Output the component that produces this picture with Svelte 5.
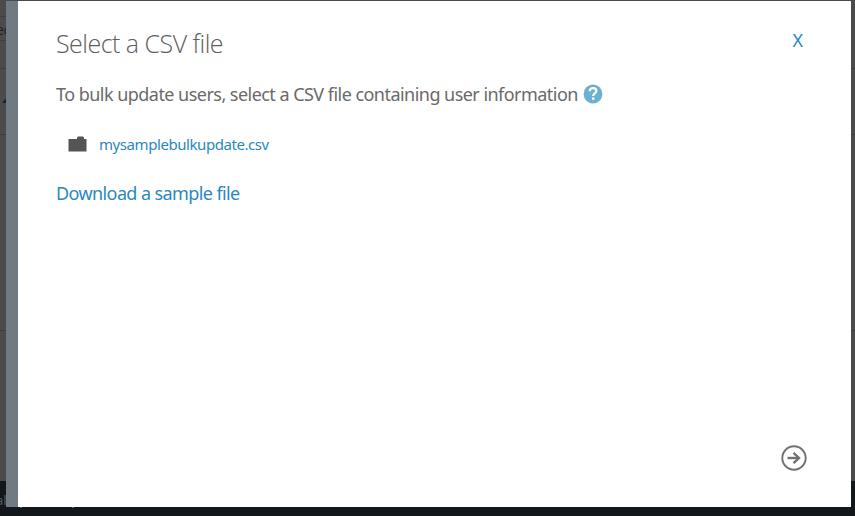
<script>
  const title = 'Select a CSV file';
  const fileName = 'mysamplebulkupdate.csv';
</script>

<div class="screen">
  <div class="page">
    <div class="row first"></div>
    <div class="row search"><span>ec</span></div>
    <div class="row head"></div>
    <div class="row sort"><svg width="6" height="6" viewBox="0 0 6 6"><path d="M1 6L6 0V6Z" fill="#18232b" /></svg></div>
    <div class="row body"></div>
    <div class="row rest"></div>
    <div class="footer"><span>al</span><i class="tail one"></i><i class="tail two"></i></div>
  </div>

  <div class="dialog">
    <header>
      <h1>{title}</h1>
      <a class="close" href="#close">X</a>
    </header>
    <div class="prompt">
      <p>To bulk update users, select a CSV file containing user information</p>
      <svg class="help" width="20" height="20" viewBox="0 0 20 20">
        <circle cx="10" cy="10" r="9.4" fill="#6bb0d3" />
        <path d="M6.7 7.2C6.8 5.2 8.2 4.2 10.1 4.2C12 4.2 13.4 5.3 13.4 7C13.4 9.2 10.3 9.3 10.2 12" fill="none" stroke="#fff" stroke-width="2.2" />
        <rect x="9" y="13.4" width="2.4" height="2.4" fill="#fff" />
      </svg>
    </div>
    <div class="file">
      <svg width="19" height="16" viewBox="0 0 19 16">
        <path d="M.5 3H9V1.5L10 .5H15L16 1.5V3H18.5V15.5H.5Z" fill="#555" />
      </svg>
      <a href="#file">{fileName}</a>
    </div>
    <a class="sample" href="#sample">Download a sample file</a>
    <svg class="next" width="26" height="26" viewBox="0 0 26 26" fill="none" stroke="#707070">
      <circle cx="13" cy="13" r="11.7" stroke-width="1.9" />
      <path d="M6.5 13H18" stroke-width="2.4" />
      <path d="M12.5 7.8L18 13L12.5 18.2" stroke-width="2.4" />
    </svg>
  </div>
</div>

<style>
  .screen {
    position: relative;
    width: 855px;
    height: 516px;
    overflow: hidden;
    font-family: "Noto Sans", "Open Sans", sans-serif;
  }
  .page { display: flex; flex-direction: column; height: 516px; background: #4b4b4b; }
  .row { box-sizing: border-box; border-bottom: 1px solid #3d3d3d; }
  .first { height: 17px; border-color: #35434c; width: 18px; }
  .search { height: 24px; border-color: #35434c; width: 18px; overflow: hidden; }
  .search span { display: block; margin-left: -4px; font-size: 14px; line-height: 26px; letter-spacing: -.4px; color: #222; }
  .head { height: 28px; }
  .sort { height: 66px; padding: 28px 0 0 1px; }
  .sort svg { display: block; }
  .body { height: 196px; }
  .rest { height: 150px; border: 0; }
  .footer { position: relative; height: 35px; background: #11171b; }
  .footer span { display: block; margin-left: -4px; padding-top: 10px; font-size: 13px; line-height: 18px; color: #555a5d; }
  .tail { position: absolute; top: 26px; width: 2px; height: 1px; background: #62676a; }
  .one { left: 20px; }
  .two { left: 72px; }
  .dialog {
    position: absolute;
    left: 6px;
    top: 1px;
    box-sizing: border-box;
    display: flex;
    flex-direction: column;
    width: 845px;
    height: 506px;
    padding: 26px 44px 36px 38px;
    border-left: 12px solid #707a82;
    background: #fff;
  }
  header { display: flex; justify-content: space-between; height: 51px; }
  h1, p, a { margin: 0; white-space: nowrap; }
  h1 { font-weight: 300; font-family: "Open Sans", sans-serif; font-size: 25px; line-height: 33px; letter-spacing: -.52px; color: #5e5e5e; }
  a { color: #2b87c0; text-decoration: none; }
  .close { font-size: 18px; line-height: 27px; margin-right: 4px; }
  .prompt { display: flex; align-items: center; height: 32px; gap: 5px; }
  p { font-size: 18px; letter-spacing: -.535px; color: #6a6a6a; }
  .help { flex: none; }
  .file { display: flex; align-items: center; height: 24px; margin-top: 22px; padding-left: 12px; gap: 12px; }
  .file a { font-size: 15px; letter-spacing: -.43px; }
  .sample { margin-top: 24px; font-size: 18px; line-height: 26px; letter-spacing: -.6px; }
  .next { margin-top: auto; align-self: flex-end; }
</style>
